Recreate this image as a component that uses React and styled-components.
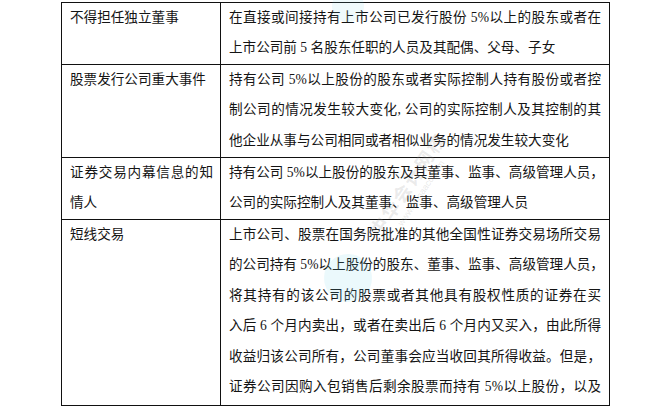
import React from "react";
import styled, { createGlobalStyle } from "styled-components";

const GlobalStyle = createGlobalStyle`
  html, body {
    margin: 0;
    padding: 0;
    background: #ffffff;
  }
`;

const Page = styled.div`
  position: relative;
  width: 662px;
  height: 415px;
  overflow: hidden;
  padding: 2px 0 0 61px;
  box-sizing: border-box;
  font-family: "Liberation Serif", "Noto Sans CJK SC", serif;
  color: #141414;
`;

const Table = styled.div`
  display: grid;
  grid-template-columns: 159px 389px;
  grid-template-rows: ${(p) => p.rows};
  width: 549px;
  border-top: 1px solid #111;
  border-left: 1px solid #111;
  box-sizing: border-box;
`;

const Cell = styled.div`
  border-right: 1px solid #111;
  border-bottom: 1px solid #111;
  padding: 0 ${(p) => (p.wide ? "8px" : "7px")} 0 8px;
  font-size: 13.6px;
  line-height: 30.4px;
  min-width: 0;
`;

const Line = styled.div`
  white-space: nowrap;
  text-align: ${(p) => (p.justify ? "justify" : "left")};
  text-align-last: ${(p) => (p.justify ? "justify" : "left")};
`;

const Watermark = styled.div`
  position: absolute;
  left: 352px;
  top: 170px;
  transform: rotate(-56deg);
  display: flex;
  flex-direction: column;
  align-items: center;
  pointer-events: none;
  font-family: "Noto Sans CJK SC", sans-serif;
`;

const MarkTitle = styled.div`
  font-size: 18px;
  font-weight: 700;
  letter-spacing: 2px;
  line-height: 22px;
  white-space: nowrap;
  color: rgba(150, 150, 150, 0.2);
`;

const MarkUrl = styled.div`
  font-size: 9px;
  line-height: 12px;
  white-space: nowrap;
  font-family: "Liberation Sans", sans-serif;
  color: rgba(150, 150, 150, 0.22);
`;

const Blob = styled.svg`
  position: absolute;
  pointer-events: none;
`;

const rows = [
  {
    term: ["不得担任独立董事"],
    desc: [
      "在直接或间接持有上市公司已发行股份 5%以上的股东或者在",
      "上市公司前 5 名股东任职的人员及其配偶、父母、子女",
    ],
  },
  {
    term: ["股票发行公司重大事件"],
    desc: [
      "持有公司 5%以上股份的股东或者实际控制人持有股份或者控",
      "制公司的情况发生较大变化, 公司的实际控制人及其控制的其",
      "他企业从事与公司相同或者相似业务的情况发生较大变化",
    ],
  },
  {
    term: ["证券交易内幕信息的知", "情人"],
    desc: [
      "持有公司 5%以上股份的股东及其董事、监事、高级管理人员，",
      "公司的实际控制人及其董事、监事、高级管理人员",
    ],
  },
  {
    term: ["短线交易"],
    desc: [
      "上市公司、股票在国务院批准的其他全国性证券交易场所交易",
      "的公司持有 5%以上股份的股东、董事、监事、高级管理人员，",
      "将其持有的该公司的股票或者其他具有股权性质的证券在买",
      "入后 6 个月内卖出，或者在卖出后 6 个月内又买入，由此所得",
      "收益归该公司所有，公司董事会应当收回其所得收益。但是，",
      "证券公司因购入包销售后剩余股票而持有 5%以上股份，以及",
    ],
    cont: true,
  },
];

const Lines = ({ items, cont }) =>
  items.map((t, i) => (
    <Line key={i} justify={cont || i < items.length - 1}>
      {t}
    </Line>
  ));

export default function App() {
  return (
    <>
      <GlobalStyle />
      <Page>
        <Table rows="62px 93px 62px 186px">
          {rows.map((r, i) => (
            <React.Fragment key={i}>
              <Cell>
                <Lines items={r.term} />
              </Cell>
              <Cell wide>
                <Lines items={r.desc} cont={r.cont} />
              </Cell>
            </React.Fragment>
          ))}
        </Table>
        <Blob width="40" height="26" viewBox="0 0 40 26" style={{ left: 328, top: 0 }}>
          <circle cx="20" cy="6" r="16" fill="rgba(120, 210, 230, 0.12)" />
        </Blob>
        <Blob width="60" height="60" viewBox="0 0 60 60" style={{ left: 318, top: 248 }}>
          <circle cx="30" cy="30" r="24" fill="rgba(110, 215, 235, 0.14)" />
        </Blob>
        <Watermark>
          <MarkTitle>中华会计网校</MarkTitle>
          <MarkUrl>www.chinaacc.com</MarkUrl>
        </Watermark>
      </Page>
    </>
  );
}
